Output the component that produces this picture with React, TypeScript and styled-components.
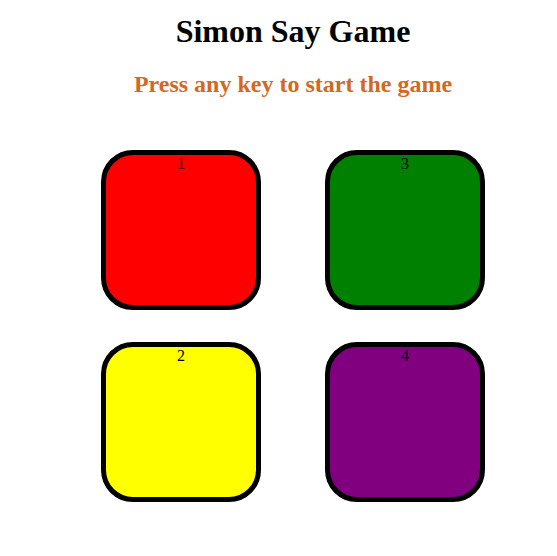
import React from "react";
import styled, { createGlobalStyle } from "styled-components";

const GlobalStyle = createGlobalStyle`
  html, body {
    margin: 0;
    padding: 0;
    background: #ffffff;
  }
  body {
    font-family: "Liberation Serif", "Times New Roman", serif;
  }
`;

const Page = styled.div`
  box-sizing: border-box;
  width: 100%;
  padding-left: 29px;
  display: flex;
  flex-direction: column;
  align-items: center;
  text-align: center;
`;

const Title = styled.h1`
  font-size: 32px;
  font-weight: bold;
  line-height: normal;
  margin: 12.5px 0 21.4px;
  color: #000000;
`;

const Subtitle = styled.h2`
  font-size: 24px;
  font-weight: bold;
  line-height: normal;
  margin: 0;
  color: chocolate;
`;

const Board = styled.div`
  display: grid;
  grid-template-columns: 160px 160px;
  column-gap: 64px;
  row-gap: 32px;
  margin-top: 52px;
`;

const Pad = styled.div<{ $color: string }>`
  width: 150px;
  height: 150px;
  border: 5px solid #000000;
  border-radius: 20%;
  background-color: ${(p) => p.$color};
  font-size: 16px;
  line-height: normal;
  text-align: center;
  color: #000000;
`;

const pads = [
  { id: "1", color: "red" },
  { id: "3", color: "green" },
  { id: "2", color: "yellow" },
  { id: "4", color: "purple" },
];

export default function App() {
  return (
    <>
      <GlobalStyle />
      <Page>
        <Title>Simon Say Game</Title>
        <Subtitle>Press any key to start the game</Subtitle>
        <Board>
          {pads.map((p) => (
            <Pad key={p.id} $color={p.color}>
              {p.id}
            </Pad>
          ))}
        </Board>
      </Page>
    </>
  );
}
